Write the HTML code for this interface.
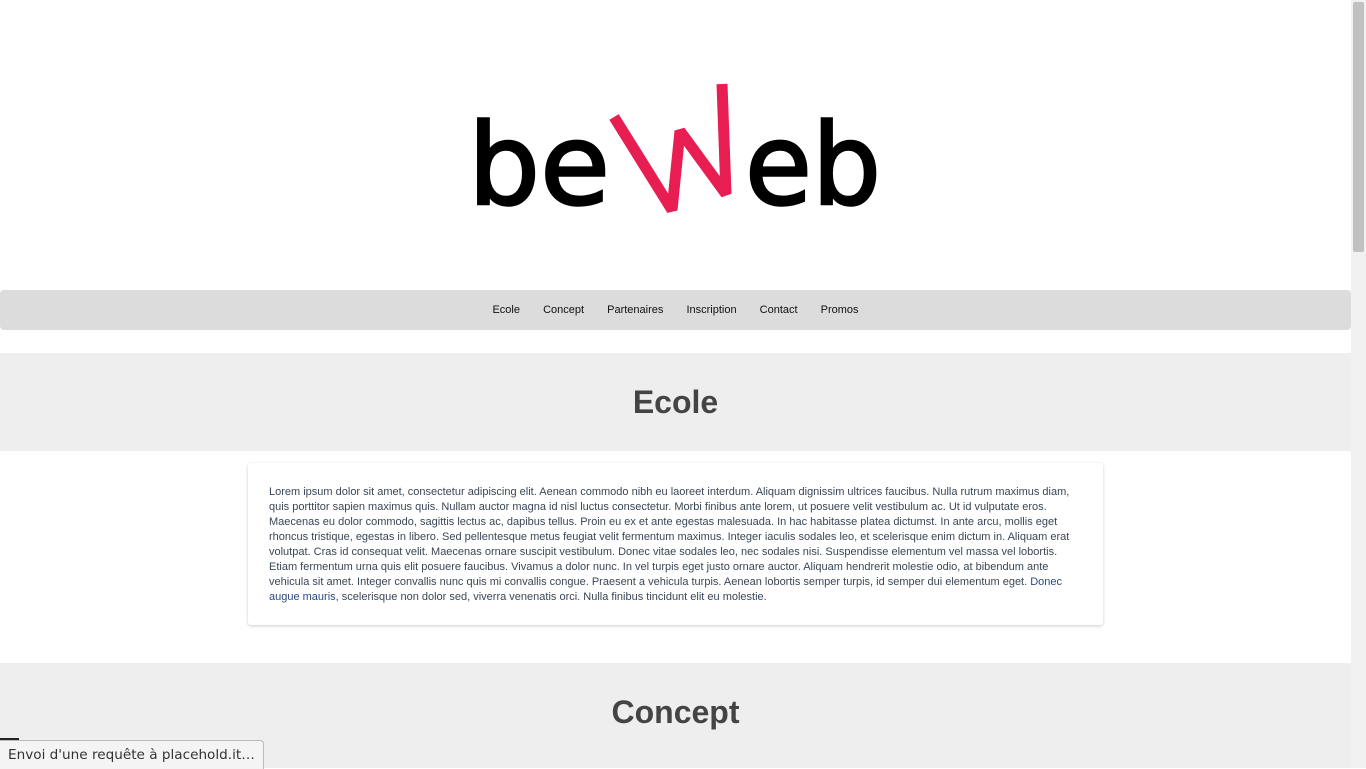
<!DOCTYPE html>
<html><head><meta charset="utf-8"><style>
body{margin:0;width:1366px;height:768px;overflow:hidden;background:#fff;font-family:"Liberation Sans",sans-serif;position:relative}
.main{width:1351px;position:absolute;left:0;top:0}
.logo{position:absolute;left:0;top:0;width:1351px;height:290px}
nav{position:absolute;top:290px;left:0;width:1351px;height:40px;background:#dcdcdc;border-radius:4px;text-align:center;font-size:11px;line-height:40px;color:#111}
nav span{margin:0 10px}
.sec{position:absolute;left:0;width:1351px;background:#eee;text-align:center;font-weight:bold;font-size:32px;color:#444}
.card{position:absolute;left:248px;top:463px;width:813px;height:120px;padding:22px 21px 20px;background:#fff;box-shadow:0 1px 3px rgba(0,0,0,.2);border-radius:3px;font-size:11px;line-height:15px;color:#3a4656}
.sb{position:absolute;right:0;top:0;width:15px;height:768px;background:#f1f1f1}
.sb div{position:absolute;left:2px;top:2px;width:11px;height:250px;background:#c1c1c1;border-radius:2px}
.st{position:absolute;left:0;top:740px;height:28px;padding:0 8px;background:#f4f4f4;border:1px solid #bbb;border-left:none;border-bottom:none;border-radius:0 4px 0 0;font-family:"DejaVu Sans",sans-serif;font-size:13.6px;line-height:28px;color:#333}
</style></head><body>
<div class="main">
<svg class="logo" width="1351" height="290">
<g font-family="DejaVu Sans,sans-serif" font-size="112" fill="#000" stroke="#000" stroke-width="2.5">
<text x="468" y="204" textLength="142" lengthAdjust="spacingAndGlyphs">be</text>
<text x="745" y="204" textLength="136" lengthAdjust="spacingAndGlyphs">eb</text>
</g>
<polyline points="614,117 672,210 680,131 726,194 722,84" fill="none" stroke="#e81e53" stroke-width="11" stroke-linejoin="bevel"/>
</svg>
<nav><span>Ecole</span> <span>Concept</span> <span>Partenaires</span> <span>Inscription</span> <span>Contact</span> <span>Promos</span></nav>
<div class="sec" style="top:353px;height:98px;line-height:98px">Ecole</div>
<div class="card">Lorem ipsum dolor sit amet, consectetur adipiscing elit. Aenean commodo nibh eu laoreet interdum. Aliquam dignissim ultrices faucibus. Nulla rutrum maximus diam, quis porttitor sapien maximus quis. Nullam auctor magna id nisl luctus consectetur. Morbi finibus ante lorem, ut posuere velit vestibulum ac. Ut id vulputate eros. Maecenas eu dolor commodo, sagittis lectus ac, dapibus tellus. Proin eu ex et ante egestas malesuada. In hac habitasse platea dictumst. In ante arcu, mollis eget rhoncus tristique, egestas in libero. Sed pellentesque metus feugiat velit fermentum maximus. Integer iaculis sodales leo, et scelerisque enim dictum in. Aliquam erat volutpat. Cras id consequat velit. Maecenas ornare suscipit vestibulum. Donec vitae sodales leo, nec sodales nisi. Suspendisse elementum vel massa vel lobortis. Etiam fermentum urna quis elit posuere faucibus. Vivamus a dolor nunc. In vel turpis eget justo ornare auctor. Aliquam hendrerit molestie odio, at bibendum ante vehicula sit amet. Integer convallis nunc quis mi convallis congue. Praesent a vehicula turpis. Aenean lobortis semper turpis, id semper dui elementum eget. <span style="color:#2a4a80">Donec augue mauris,</span> scelerisque non dolor sed, viverra venenatis orci. Nulla finibus tincidunt elit eu molestie.</div>
<div class="sec" style="top:663px;height:105px;line-height:98px">Concept</div>
</div>
<div class="sb"><div></div></div>
<div style="position:absolute;left:0;top:738px;width:19px;height:3px;background:#222"></div>
<div class="st">Envoi d'une requête à placehold.it…</div>
</body></html>
